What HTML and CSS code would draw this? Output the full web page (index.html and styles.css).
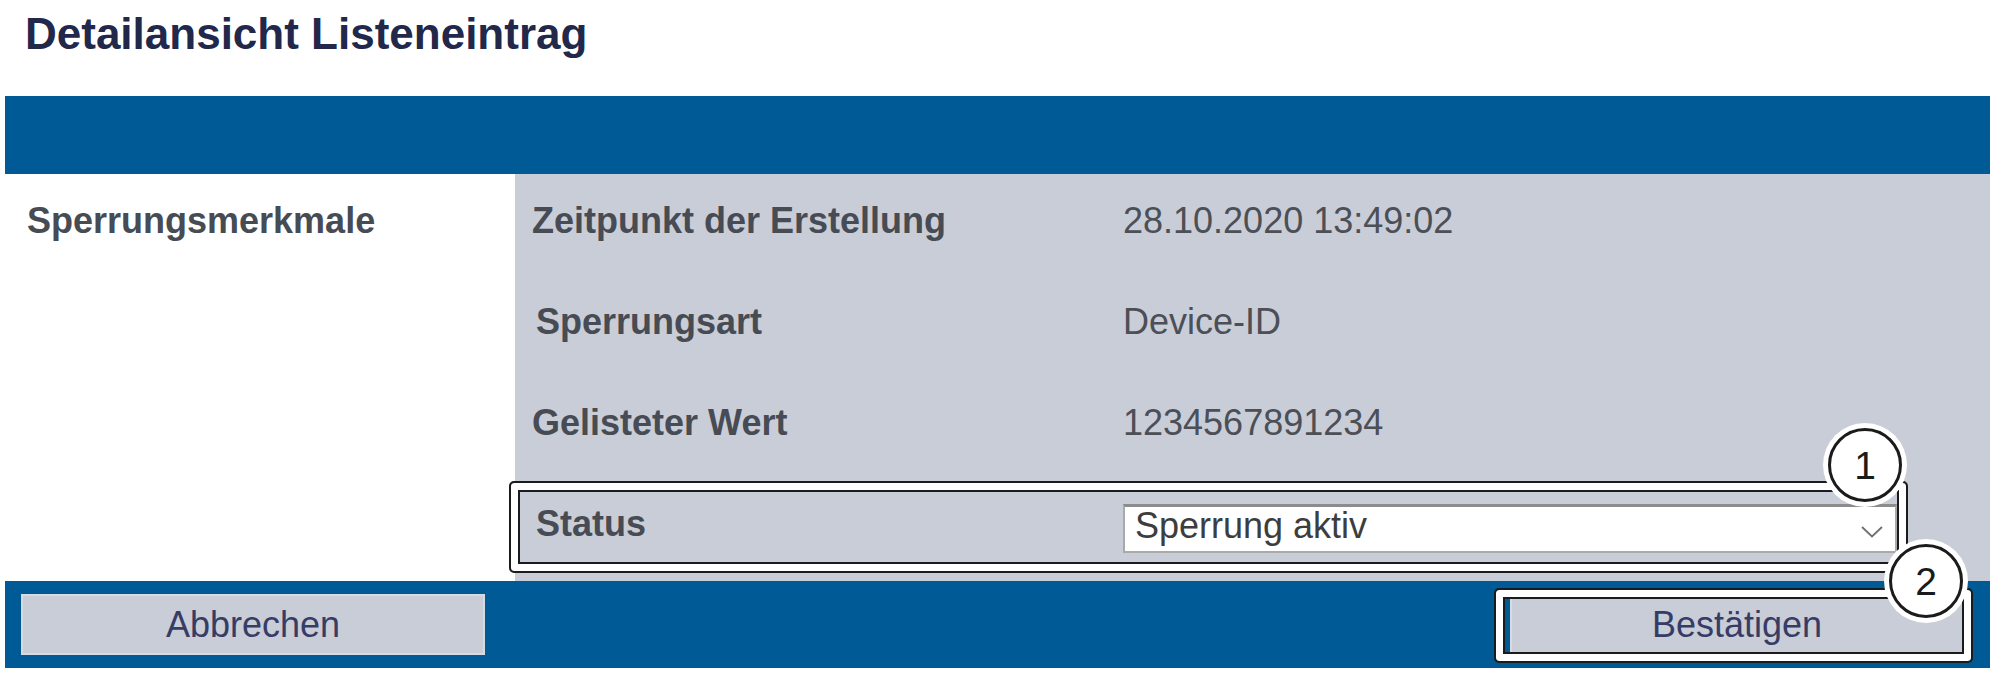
FILE: index.html
```html
<!DOCTYPE html>
<html lang="de">
<head>
  <meta charset="UTF-8">
  <title>Detailansicht Listeneintrag</title>
  <link rel="stylesheet" href="styles.css">
</head>
<body>

<div class="page">
  <h1 class="title">Detailansicht Listeneintrag</h1>

  <div class="bar"></div>

  <!-- Detailbereich -->
  <div class="detail">
    <div class="group">Sperrungsmerkmale</div>

    <div class="fields">
      <div class="field">
        <span class="label">Zeitpunkt der Erstellung</span>
        <span class="value">28.10.2020 13:49:02</span>
      </div>
      <div class="field">
        <span class="label indent">Sperrungsart</span>
        <span class="value">Device-ID</span>
      </div>
      <div class="field">
        <span class="label">Gelisteter Wert</span>
        <span class="value">1234567891234</span>
      </div>
      <div class="field field-status">
        <span class="label indent">Status</span>
        <div class="select">
          <span>Sperrung aktiv</span>
          <svg width="22" height="12" viewBox="0 0 22 12"><polyline points="1,1 11,10.5 21,1" fill="none" stroke="#6f6f6f" stroke-width="1.8"/></svg>
        </div>
        <span class="mark mark-status"><span class="num num-1">1</span></span>
      </div>
    </div>
  </div>

  <!-- Aktionen -->
  <div class="footer">
    <button class="btn">Abbrechen</button>
    <div class="confirm">
      <button class="btn btn-confirm">Bestätigen</button>
      <span class="mark mark-confirm"><span class="num num-2">2</span></span>
    </div>
  </div>
</div>

</body>
</html>
```

FILE: styles.css
```css
/* Detailansicht */
body {
  margin: 0;
  background: #fff;
  font-family: "Liberation Sans", Arial, sans-serif;
}

.page {
  width: 1985px;
  padding-left: 5px;
}

.title {
  margin: 0;
  padding: 9px 0 0 20px;
  font-size: 44px;
  line-height: 50px;
  font-weight: bold;
  color: #21284a;
}

.bar {
  margin-top: 37px;
  height: 78px;
  background: #005a96;
}

.detail {
  display: grid;
  grid-template-columns: 510px 1fr;
  height: 407px;
}

.group {
  padding: 27px 0 0 22px;
  font-size: 36px;
  line-height: 40px;
  font-weight: bold;
  color: #474b53;
}

.fields {
  background: #c8cdd8;
  padding: 27px 0 0 17px;
  display: flex;
  flex-direction: column;
  gap: 61px;
}

.field {
  display: grid;
  grid-template-columns: 591px 774px;
  align-items: start;
  font-size: 36px;
  line-height: 40px;
}

.label {
  font-weight: bold;
  color: #474b53;
}

.label.indent {
  padding-left: 4px;
}

.value {
  color: #4c4f55;
}

.field-status {
  position: relative;
}

.select {
  box-sizing: border-box;
  height: 49px;
  display: flex;
  align-items: center;
  justify-content: space-between;
  padding: 0 12px 6px 10px;
  background: #fff;
  border: 2px solid #a9a9a9;
  border-top: 3px solid #8c8c8c;
  color: #3d3d3d;
}

.select svg {
  margin-top: 11px;
}

/* Markierungen */
.mark {
  position: absolute;
  border: 2px solid #1b1b1b;
  border-radius: 5px;
  box-shadow: inset 0 0 0 7px #fff, inset 0 0 0 9px #1b1b1b;
}

.mark-status {
  left: -23px;
  right: 82px;
  top: -23px;
  bottom: -20px;
}

.mark-confirm {
  left: -16px;
  right: -9px;
  top: -6px;
  bottom: -8px;
}

.num {
  position: absolute;
  box-sizing: border-box;
  width: 74px;
  height: 74px;
  display: flex;
  align-items: center;
  justify-content: center;
  border: 3px solid #1b1b1b;
  border-radius: 50%;
  background: #fff;
  box-shadow: 0 0 0 5px #fff;
  font-size: 39px;
  line-height: 1;
  color: #1b1b1b;
}

.num-1 {
  right: 4px;
  top: -55px;
}

.num-2 {
  right: 8px;
  top: -46px;
}

.footer {
  height: 87px;
  box-sizing: border-box;
  padding: 13px 26px 0 16px;
  background: #005a96;
  display: flex;
  justify-content: space-between;
  align-items: flex-start;
}

.btn {
  box-sizing: border-box;
  width: 464px;
  height: 61px;
  padding: 0;
  background: #c8cdd8;
  border: 2px solid #d6dae3;
  font-family: inherit;
  font-size: 36px;
  color: #373c66;
  cursor: pointer;
}

.confirm {
  position: relative;
}

.btn-confirm {
  width: 454px;
}
```
